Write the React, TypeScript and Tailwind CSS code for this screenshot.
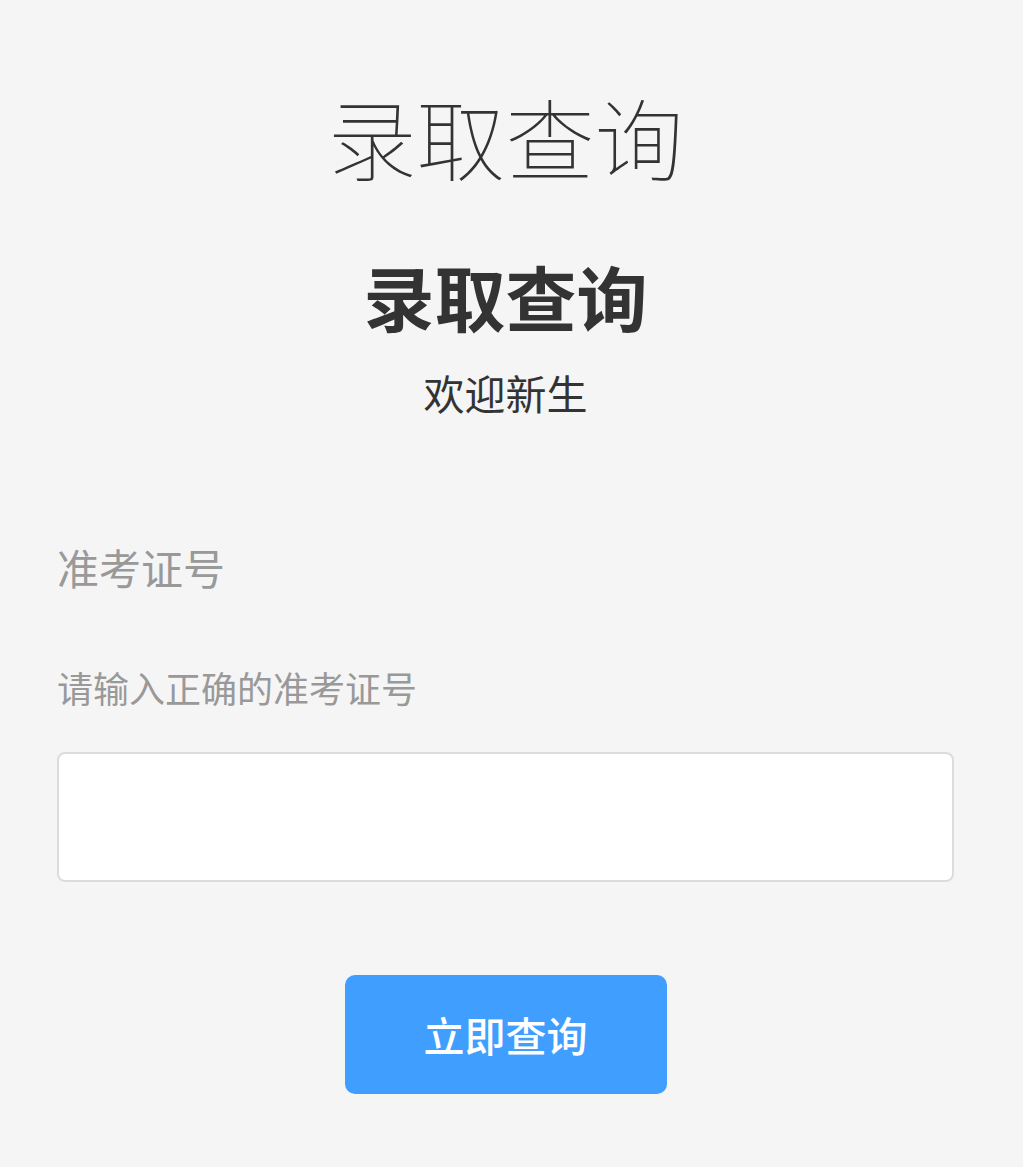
import React from 'react';

const cjk = "font-['Noto_Sans_CJK_SC','Noto_Sans',sans-serif]";

export default function App() {
  const [ticket, setTicket] = React.useState('');

  return (
    <div className={`min-h-[1167px] bg-[#f5f5f5] ${cjk}`}>
      <div className="w-[1011px] px-[57px] pt-[91px] flex flex-col">
        <h1 className="text-center text-[89px] leading-none font-thin text-[#333]">录取查询</h1>
        <h2 className="mt-[80px] text-center text-[71px] leading-none font-bold text-[#333]">录取查询</h2>
        <p className="mt-[41px] text-center text-[41px] leading-none text-[#333]">欢迎新生</p>

        <label className="mt-[133px] text-[42px] leading-none text-[#999]">准考证号</label>
        <p className="mt-[81px] text-[36px] leading-none text-[#999]">请输入正确的准考证号</p>
        <input
          value={ticket}
          onChange={(e) => setTicket(e.target.value)}
          className="mt-[47px] h-[130px] w-full rounded-[8px] border-2 border-[#dcdcdc] bg-white px-6 text-[36px] outline-none"
        />

        <div className="mt-[93px] flex justify-center">
          <button className="h-[119px] w-[322px] rounded-[10px] bg-[#409eff] text-[41px] font-medium text-white">
            立即查询
          </button>
        </div>
      </div>
    </div>
  );
}
